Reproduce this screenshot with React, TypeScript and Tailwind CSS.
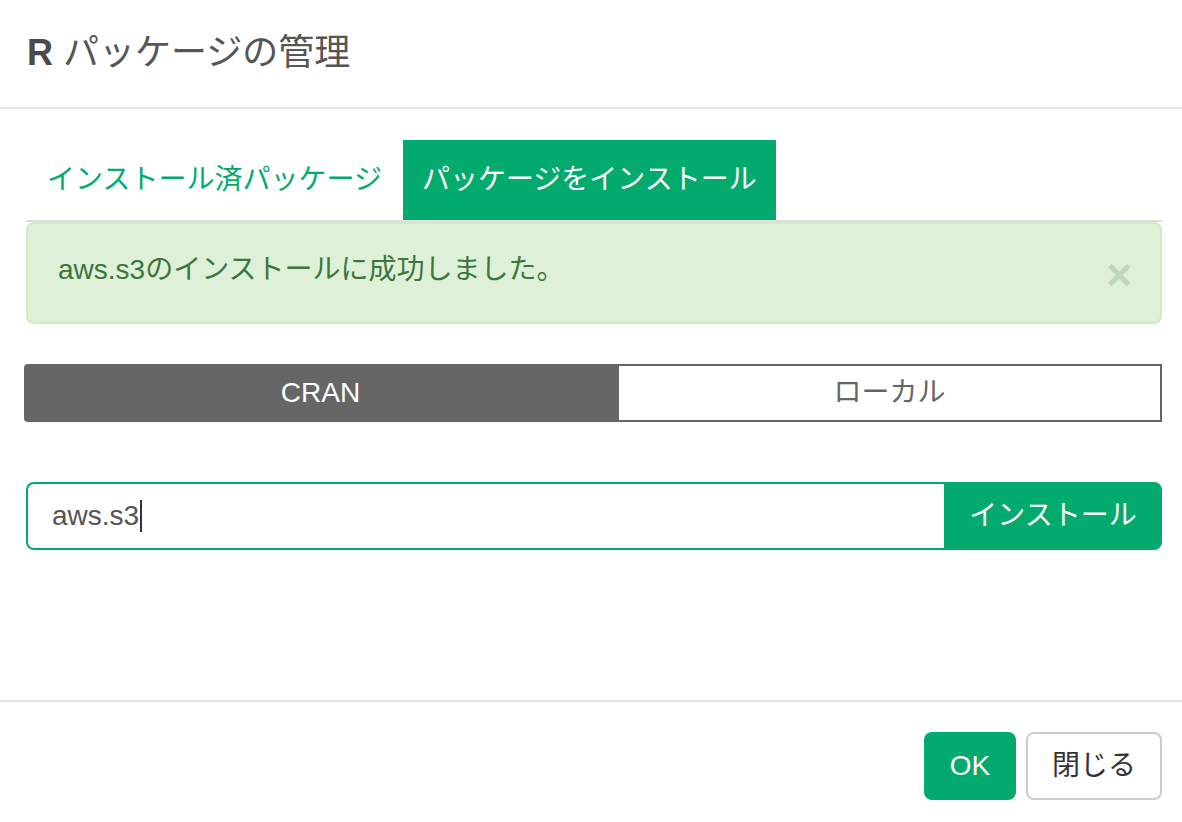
import React from 'react'

const font = { fontFamily: '"Liberation Sans", "Noto Sans CJK JP", sans-serif' }

function Tabs() {
  return (
    <div className="flex border-b-2 border-[#dddddd] h-[82px]">
      <div className="h-[80px] px-[21px] flex items-center text-[28px] text-[#02ab6d]">
        インストール済パッケージ
      </div>
      <div className="h-[80px] px-[19px] flex items-center text-[28px] text-white bg-[#02ab6d]">
        パッケージをインストール
      </div>
    </div>
  )
}

function SuccessAlert() {
  return (
    <div className="h-[102px] rounded-[8px] border-2 border-[#d6e9c6] bg-[#dff0d8] flex items-center justify-between pl-[30px] pr-[28px] text-[#3c763d] text-[28px]">
      <span className="-mt-[6px]">aws.s3のインストールに成功しました。</span>
      <span className="text-[44px] font-bold leading-none text-[#bed8b9] mt-[4px]">×</span>
    </div>
  )
}

function SourceToggle() {
  return (
    <div className="flex h-[58px] mt-[40px] -ml-[2px] text-[28px]">
      <div className="flex-1 rounded-l-[4px] bg-[#666666] text-white flex items-center justify-center">CRAN</div>
      <div className="w-[545px] border-2 border-[#666666] bg-white text-[#666666] flex items-center justify-center">
        ローカル
      </div>
    </div>
  )
}

function PackageInput() {
  return (
    <div className="flex h-[68px] mt-[60px] text-[28px]">
      <div className="flex-1 border-2 border-r-0 border-[#02ab6d] rounded-l-[8px] flex items-center pl-[24px] text-[#555555]">
        <span>aws.s3</span>
        <span className="w-[2px] h-[32px] bg-[#333333] ml-[1px]" />
      </div>
      <button className="w-[218px] bg-[#02ab6d] text-white rounded-r-[8px] flex items-center justify-center">
        インストール
      </button>
    </div>
  )
}

export default function App() {
  return (
    <div className="w-[1182px] h-[822px] bg-white overflow-hidden" style={font}>
      <div className="h-[109px] border-b-2 border-[#e5e5e5] flex items-center pl-[27px] pb-[2px]">
        <h1 className="text-[36px] text-[#555555]">
          <span className="font-bold text-[#4a4a4a]">R</span> パッケージの管理
        </h1>
      </div>

      <div className="h-[591px] pt-[31px] pl-[26px] pr-[20px]">
        <Tabs />
        <SuccessAlert />
        <SourceToggle />
        <PackageInput />
      </div>

      <div className="border-t-2 border-[#e5e5e5] flex justify-end gap-[10px] pt-[30px] pr-[20px]">
        <button className="w-[92px] h-[68px] rounded-[8px] bg-[#02ab6d] text-white text-[28px]">OK</button>
        <button className="w-[136px] h-[68px] rounded-[8px] border-2 border-[#cccccc] bg-white text-[#333333] text-[28px]">
          閉じる
        </button>
      </div>
    </div>
  )
}
